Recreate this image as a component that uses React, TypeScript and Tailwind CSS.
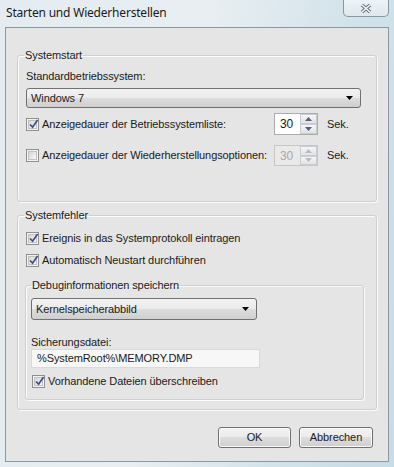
import React from "react";

const btnBg =
  "bg-[linear-gradient(#f2f2f2,#ebebeb_50%,#dddddd_50%,#cfcfcf)]";

const Check = ({ checked }: { checked?: boolean }) => (
  <span className="flex h-[13px] w-[13px] shrink-0 items-center justify-center border border-[#8f8f8f] bg-[#f4f4f4]">
    <span className="relative flex h-[9px] w-[9px] items-center justify-center border border-[#c2c2c2] bg-gradient-to-br from-[#d6d6d6] to-[#f8f8f8]">
      {checked && (
        <svg
          className="absolute -top-[2px] left-[0px]"
          width="10"
          height="10"
          viewBox="0 0 10 10"
        >
          <path
            d="M1 5.5 L3.6 8.2 L8.6 1"
            fill="none"
            stroke="#3d5389"
            strokeWidth="1.8"
          />
        </svg>
      )}
    </span>
  </span>
);

const CheckRow = ({
  checked,
  label,
  className = "",
}: {
  checked?: boolean;
  label: string;
  className?: string;
}) => (
  <div className={`flex h-4 items-center gap-[3px] ${className}`}>
    <Check checked={checked} />
    <span className="whitespace-nowrap leading-4">{label}</span>
  </div>
);

const Arrow = ({ up, disabled }: { up?: boolean; disabled?: boolean }) => (
  <div className="flex flex-1 items-center justify-center border border-[#c9ccd2] bg-gradient-to-b from-[#f6f6f6] to-[#e2e2e2]">
    <svg width="7" height="4" viewBox="0 0 7 4">
      <path
        d={up ? "M0 4h7L3.5 0z" : "M0 0h7L3.5 4z"}
        fill={disabled ? "#b8bcc4" : "#4f6284"}
      />
    </svg>
  </div>
);

const Spin = ({ disabled }: { disabled?: boolean }) => (
  <div
    className={`flex h-full w-[44px] shrink-0 border ${
      disabled
        ? "border-[#c6c6c6] bg-[#e9e9e9] text-[#a8a8a8]"
        : "border-[#a9abb0] bg-white text-[#1a1a1a]"
    }`}
  >
    <span className="flex flex-1 items-center pl-[5px] text-[12px]">30</span>
    <div className="flex w-[17px] flex-col">
      <Arrow up disabled={disabled} />
      <Arrow disabled={disabled} />
    </div>
  </div>
);

const Select = ({ value, className }: { value: string; className: string }) => (
  <div
    className={`flex items-center justify-between rounded-[3px] border border-[#707070] ${btnBg} pl-[4px] pr-[7px] ${className}`}
  >
    <span>{value}</span>
    <svg width="7" height="4" viewBox="0 0 7 4">
      <path d="M0 0h7L3.5 4z" fill="#000" />
    </svg>
  </div>
);

const groupCls =
  "rounded-[3px] border border-[#cfcfcf] shadow-[inset_1px_1px_0_#fbfbfb,1px_1px_0_#fbfbfb]";

export default function App() {
  return (
    <div className="flex h-[467px] w-[394px] flex-col overflow-hidden bg-[linear-gradient(100deg,#e4ecf1_0%,#e8eef2_45%,#d2e3ea_75%,#c6dce6_100%)] text-[#1a1a1a]">
      {/* title bar */}
      <div className="flex h-[27px] shrink-0 items-start justify-between">
        <span className="pl-[6px] pt-[5px] font-['Noto_Sans',sans-serif] text-[12px] leading-4 tracking-[-0.2px]">
          Starten und Wiederherstellen
        </span>
        <div className="mr-[5px] flex h-[17px] w-[46px] items-center justify-center rounded-b-[5px] border border-t-0 border-[#8598a6] bg-[linear-gradient(#eef3f6,#dde8ee)]">
          <svg width="14" height="11" viewBox="0 0 14 11">
            <path
              d="M3 2 L11 9 M11 2 L3 9"
              stroke="#66717b"
              strokeWidth="3.6"
            />
            <path
              d="M3 2 L11 9 M11 2 L3 9"
              stroke="#f6f8fa"
              strokeWidth="1.6"
            />
          </svg>
        </div>
      </div>

      {/* client area */}
      <div className="mx-[5px] flex h-[435px] shrink-0 flex-col border border-[#8a98a3] bg-[#e5e5e5] font-['Liberation_Sans',Arial,sans-serif] text-[11px] tracking-[-0.1px]">
        <fieldset className={`ml-[11px] mt-[19px] h-[155px] w-[360px] pl-[8px] ${groupCls}`}>
          <legend className="-ml-[2px] px-[1px] leading-4">Systemstart</legend>
          <div className="mt-[5px] leading-4">Standardbetriebssystem:</div>
          <Select value="Windows 7" className="mt-[4px] h-[20px] w-[335px]" />
          <div className="mt-[5px] flex h-[22px] items-center">
            <Check checked />
            <span className="ml-[3px] w-[232px] whitespace-nowrap">
              Anzeigedauer der Betriebssystemliste:
            </span>
            <Spin />
            <span className="ml-[9px]">Sek.</span>
          </div>
          <div className="mt-[10px] flex h-[21px] items-center">
            <Check />
            <span className="ml-[3px] w-[232px] whitespace-nowrap">
              Anzeigedauer der Wiederherstellungsoptionen:
            </span>
            <Spin disabled />
            <span className="ml-[9px]">Sek.</span>
          </div>
        </fieldset>

        <fieldset className={`ml-[11px] mt-[5px] h-[203px] w-[360px] pl-[7px] ${groupCls}`}>
          <legend className="-ml-[1px] px-[1px] leading-4">Systemfehler</legend>
          <CheckRow
            checked
            label="Ereignis in das Systemprotokoll eintragen"
            className="mt-[7px] pl-[1px]"
          />
          <CheckRow
            checked
            label="Automatisch Neustart durchführen"
            className="mt-[6px] pl-[1px]"
          />
          <fieldset className={`mt-[9px] h-[123px] w-[339px] pl-[5px] ${groupCls}`}>
            <legend className="px-[1px] leading-4">
              Debuginformationen speichern
            </legend>
            <Select
              value="Kernelspeicherabbild"
              className="mt-[5px] h-[22px] w-[226px]"
            />
            <div className="mt-[15px] leading-[14px]">Sicherungsdatei:</div>
            <div className="flex h-[19px] w-[229px] items-center border border-[#dadada] bg-[#f7f7f7] pl-[5px]">
              %SystemRoot%\MEMORY.DMP
            </div>
            <CheckRow
              checked
              label="Vorhandene Dateien überschreiben"
              className="mt-[5px] pl-[1px]"
            />
          </fieldset>
        </fieldset>

        <div className="mt-[17px] flex justify-end gap-[8px] pr-[15px]">
          <button
            className={`h-[21px] w-[73px] rounded-[3px] border border-[#707070] ${btnBg} shadow-[inset_0_0_0_1px_#fafafa]`}
          >
            OK
          </button>
          <button
            className={`h-[21px] w-[74px] rounded-[3px] border border-[#707070] ${btnBg} shadow-[inset_0_0_0_1px_#fafafa]`}
          >
            Abbrechen
          </button>
        </div>
      </div>
    </div>
  );
}
